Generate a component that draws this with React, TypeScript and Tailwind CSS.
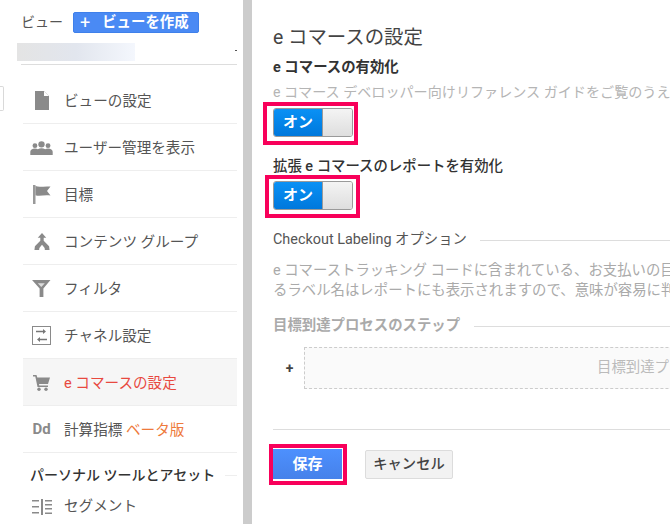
const Doc = () => (
  <svg width="16" height="19" viewBox="0 0 16 19"><path d="M1 0h9l5 5v14H1z" fill="#8a8a8a" /><path d="M10 0v5h5z" fill="#fff" /></svg>
);
const People = () => (
  <svg width="23" height="14" viewBox="0 0 24 15" fill="#8a8a8a"><circle cx="12" cy="3.600" r="3.400" /><circle cx="5" cy="5" r="2.600" /><circle cx="19" cy="5" r="2.600" /><path d="M0 15v-3.500c0-2 2-3.400 5-3.400 1.300 0 2.300.3 3 .7 1.200-.7 2.600-1 4-1s2.800.3 4 1c.7-.4 1.700-.7 3-.7 3 0 5 1.400 5 3.400V15z" /></svg>
);
const Flag = () => (
  <svg width="18" height="19" viewBox="0 0 18 19"><path d="M0 0h2.500v19H0z" fill="#999" /><path d="M2.500 1c4 1.600 9-.2 15 .6l-3.500 4.400 3.500 4.600c-6-1-11 1-15-.4z" fill="#8a8a8a" /></svg>
);
const Branch = () => (
  <svg width="16" height="17" viewBox="0 0 16 18" fill="#8a8a8a"><path d="M8 0l4.500 5H9.800v3.200L15.500 14 16 18h-5l-.2-2.200L8 12.500l-2.800 3.300L5 18H0l.5-4 5.700-5.800V5H3.500z" /></svg>
);
const Funnel = () => (
  <svg width="19" height="17" viewBox="0 0 20 18"><path d="M0 0h19.500l-7.500 9v9H8V9z" fill="#8a8a8a" /><path d="M6 3.500h7.500L9.800 7.500z" fill="#dcdcdc" /></svg>
);
const Channel = () => (
  <svg width="19" height="19" viewBox="0 0 19 19" fill="none"><rect x="0.500" y="0.500" width="18" height="18" stroke="#8a8a8a" /><path d="M4 5.500h7M8 13.500h7" stroke="#777" strokeWidth="1.500" /><path d="M11 3l3 2.500-3 2.500zM8 11l-3 2.500 3 2.500z" fill="#777" /></svg>
);
const Cart = () => (
  <svg width="17" height="16" viewBox="0 0 17 16" fill="#8a8a8a"><path d="M0 0h3.500l.8 2.500H17l-2 6.500H6l.3 1.500H15V12H4.500L2.300 1.500H0z" /><circle cx="6" cy="14.300" r="1.700" /><circle cx="13" cy="14.300" r="1.700" /></svg>
);
const Segment = () => (
  <svg width="20" height="16" viewBox="0 0 20 16" fill="#8a8a8a"><path d="M9 0h2v16H9zM0 1h7v1.500H0zM0 7h7v1.500H0zM0 13h7v1.500H0zM13 1h7v1.500h-7zM13 5h7v1.500h-7zM13 9h7v1.500h-7zM13 13.500h7V15h-7z" /></svg>
);

const rows = [
  { icon: <Doc />, label: "ビューの設定" },
  { icon: <People />, label: "ユーザー管理を表示" },
  { icon: <Flag />, label: "目標" },
  { icon: <Branch />, label: "コンテンツ グループ" },
  { icon: <Funnel />, label: "フィルタ" },
  { icon: <Channel />, label: "チャネル設定" },
];

function Row({ icon, children, className = "" }: { icon: React.ReactNode; children: React.ReactNode; className?: string }) {
  return (
    <div className={`flex h-[47px] items-center border-b border-[#eeeeee] pt-[1px] ${className}`}>
      <div className="mr-[4px] flex w-[37px] shrink-0 items-center justify-center">{icon}</div>
      {children}
    </div>
  );
}

function Toggle() {
  return (
    <div className="flex h-[29px] w-[80px] overflow-hidden rounded-[3px] border border-[#9a9a9a]">
      <div className="flex w-[48px] items-center justify-center bg-gradient-to-b from-[#0a91f5] to-[#0078dc] text-[15px] font-bold text-white">オン</div>
      <div className="flex-1 border-l border-[#9a9a9a] bg-gradient-to-b from-[#f4f4f4] to-[#dedede]" />
    </div>
  );
}

function Outline({ className }: { className: string }) {
  return <div className={`absolute border-[4px] border-[#f8005a] ${className}`} />;
}

export default function App() {
  return (
    <div
      className="relative flex h-[524px] w-[670px] overflow-hidden bg-white text-[14px] text-[#444]"
      style={{ fontFamily: 'Roboto, "Noto Sans CJK JP", sans-serif' }}
    >
      <div className="absolute left-0 top-[86px] h-[25px] w-[4px] rounded-r-[2px] border border-l-0 border-[#d9d9d9]" />

      <aside className="w-[243px] shrink-0 pl-[21px] pr-[6px]">
        <div className="flex h-[33px] items-end">
          <span className="mb-[2px] text-[14px] leading-[18px] text-[#555]">ビュー</span>
          <div className="ml-[10px] flex h-[21px] w-[126px] items-center rounded-[2px] border border-[#3f80ea] bg-[#4a8af4] pl-[6px] text-[14.4px] font-bold text-white">
            <span className="mr-[12px] text-[18px] font-normal leading-none">+</span>ビューを作成
          </div>
        </div>
        <div className="relative h-[32px] border-b border-[#dddddd]">
          <div className="absolute -left-[4px] top-[10px] h-[18px] w-[118px] bg-gradient-to-r from-[#e4e4e4] via-[#e2e6ee] to-[#f4f7fd]" />
          <div className="absolute right-0 top-[17px] h-[1px] w-[2px] bg-[#555]" />
        </div>
        <div className="ml-[2px] pt-[12px]">
          {rows.map((r) => (
            <Row key={r.label} icon={r.icon}>
              <span className="mt-[3px] text-[14.6px] text-[#555]">{r.label}</span>
            </Row>
          ))}
          <Row icon={<Cart />} className="bg-[#f6f6f6]">
            <span className="mt-[3px] text-[14.6px] text-[#e8493f]">e コマースの設定</span>
          </Row>
          <Row icon={<span className="text-[15px] font-bold text-[#8a8a8a]">Dd</span>}>
            <span className="mt-[3px] text-[14.6px] text-[#555]">計算指標 <span className="text-[#ee7a3c]">ベータ版</span></span>
          </Row>
          <div className="flex h-[44px] items-center pl-[7px]">
            <span className="text-[14px] font-medium text-[#333]">パーソナル ツールとアセット</span>
            <div className="ml-[10px] h-px flex-1 bg-[#eeeeee]" />
          </div>
          <div className="-mt-[5px] flex h-[30px] items-center">
            <div className="mr-[4px] flex w-[37px] shrink-0 items-center justify-center"><Segment /></div>
            <span className="text-[14.6px] text-[#555]">セグメント</span>
          </div>
        </div>
      </aside>

      <div className="w-[9px] shrink-0 bg-[#cccccc]" />

      <main className="min-w-0 flex-1 pl-[21px]">
        <h1 className="mt-[25px] whitespace-nowrap text-[19.4px] font-normal leading-[26px] text-[#444]">e コマースの設定</h1>
        <h2 className="mt-[8px] whitespace-nowrap text-[14.4px] font-bold leading-[18px] text-[#333]">e コマースの有効化</h2>
        <p className="mt-[6px] whitespace-nowrap text-[14.1px] leading-[18px] text-[#b5b5b5]">e コマース デベロッパー向けリファレンス ガイドをご覧のうえ</p>
        <div className="mt-[7px]"><Toggle /></div>
        <h2 className="mt-[21px] whitespace-nowrap text-[14.4px] font-medium leading-[18px] text-[#333]">拡張 e コマースのレポートを有効化</h2>
        <div className="mt-[5px]"><Toggle /></div>

        <div className="mt-[21px] flex h-[18px] items-center">
          <span className="whitespace-nowrap text-[14.4px] text-[#555]">Checkout Labeling オプション</span>
          <div className="ml-[13px] h-px w-[300px] shrink-0 bg-[#dddddd]" />
        </div>
        <p className="mt-[12px] w-[397px] overflow-hidden whitespace-nowrap text-[14.4px] leading-[20px] text-[#aaaaaa]">
          e コマーストラッキング コードに含まれている、お支払いの目
          <br />
          るラベル名はレポートにも表示されますので、意味が容易に判
        </p>
        <div className="mt-[16px] flex h-[18px] items-center">
          <span className="whitespace-nowrap text-[14.4px] font-bold text-[#aaaaaa]">目標到達プロセスのステップ</span>
          <div className="ml-[14px] h-px w-[300px] shrink-0 bg-[#dddddd]" />
        </div>
        <div className="mt-[12px] flex h-[42px]">
          <div className="flex w-[33px] shrink-0 items-center justify-center text-[14px] font-bold text-[#444]">+</div>
          <div className="-ml-[2px] flex w-[500px] shrink-0 items-center whitespace-nowrap border border-dashed border-[#cccccc] bg-[#fafafa] pl-[292px] text-[14.4px] text-[#bbbbbb]">目標到達プ</div>
        </div>
        <div className="mt-[40px] h-px w-[420px] bg-[#dddddd]" />
        <div className="mt-[19px] flex items-start">
          <button className="h-[30px] w-[69px] bg-gradient-to-b from-[#4d90fe] to-[#4681ea] text-[15px] font-bold text-white">保存</button>
          <button className="ml-[23px] mt-[1px] h-[29px] w-[88px] rounded-[2px] border border-[#dcdcdc] bg-[#f2f2f2] text-[14.3px] font-medium text-[#444]">キャンセル</button>
        </div>
      </main>

      <Outline className="left-[263px] top-[102px] h-[43px] w-[95px]" />
      <Outline className="left-[265px] top-[175px] h-[43px] w-[95px]" />
      <Outline className="left-[269px] top-[444px] h-[41px] w-[78px]" />
    </div>
  );
}
